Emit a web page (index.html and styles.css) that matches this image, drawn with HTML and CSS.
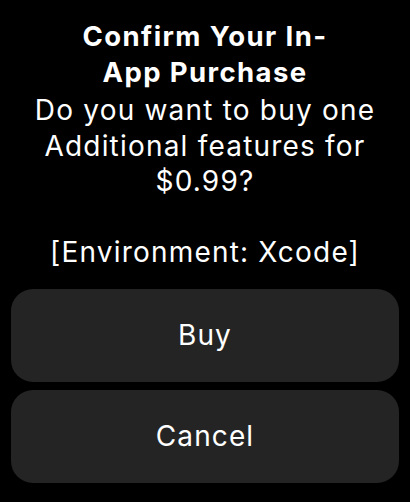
FILE: index.html
```html
<!DOCTYPE html>
<html>
<head>
<meta charset="utf-8">
<link rel="stylesheet" href="styles.css">
</head>
<body>
<div class="alert">
  <h1 class="title">Confirm Your In-<br>App Purchase</h1>
  <p class="message">Do you want to buy one Additional features for $0.99?<br><br>[Environment: Xcode]</p>
  <div class="actions">
    <button class="action">Buy</button>
    <button class="action">Cancel</button>
  </div>
</div>
</body>
</html>
```
FILE: styles.css
```css
html, body {
  margin: 0;
  padding: 0;
  background: #000;
}
body {
  font-family: Inter, "Noto Sans", sans-serif;
  color: #fff;
}
.alert {
  display: flex;
  flex-direction: column;
  padding: 18px 11px 0;
  text-align: center;
}
.title {
  margin: 0;
  font-size: 27.5px;
  font-weight: 700;
  line-height: 36px;
  letter-spacing: 1.4px;
}
.message {
  margin: 3px 0 0;
  font-size: 28px;
  font-weight: 400;
  line-height: 35.5px;
  letter-spacing: 1.2px;
}
.actions {
  display: flex;
  flex-direction: column;
  gap: 8px;
  margin-top: 18px;
}
.action {
  height: 93px;
  border: none;
  border-radius: 22px;
  background: #242424;
  color: #fff;
  font-family: Inter, "Noto Sans", sans-serif;
  font-size: 28px;
  font-weight: 400;
  letter-spacing: 1.1px;
  padding: 0;
}
```
